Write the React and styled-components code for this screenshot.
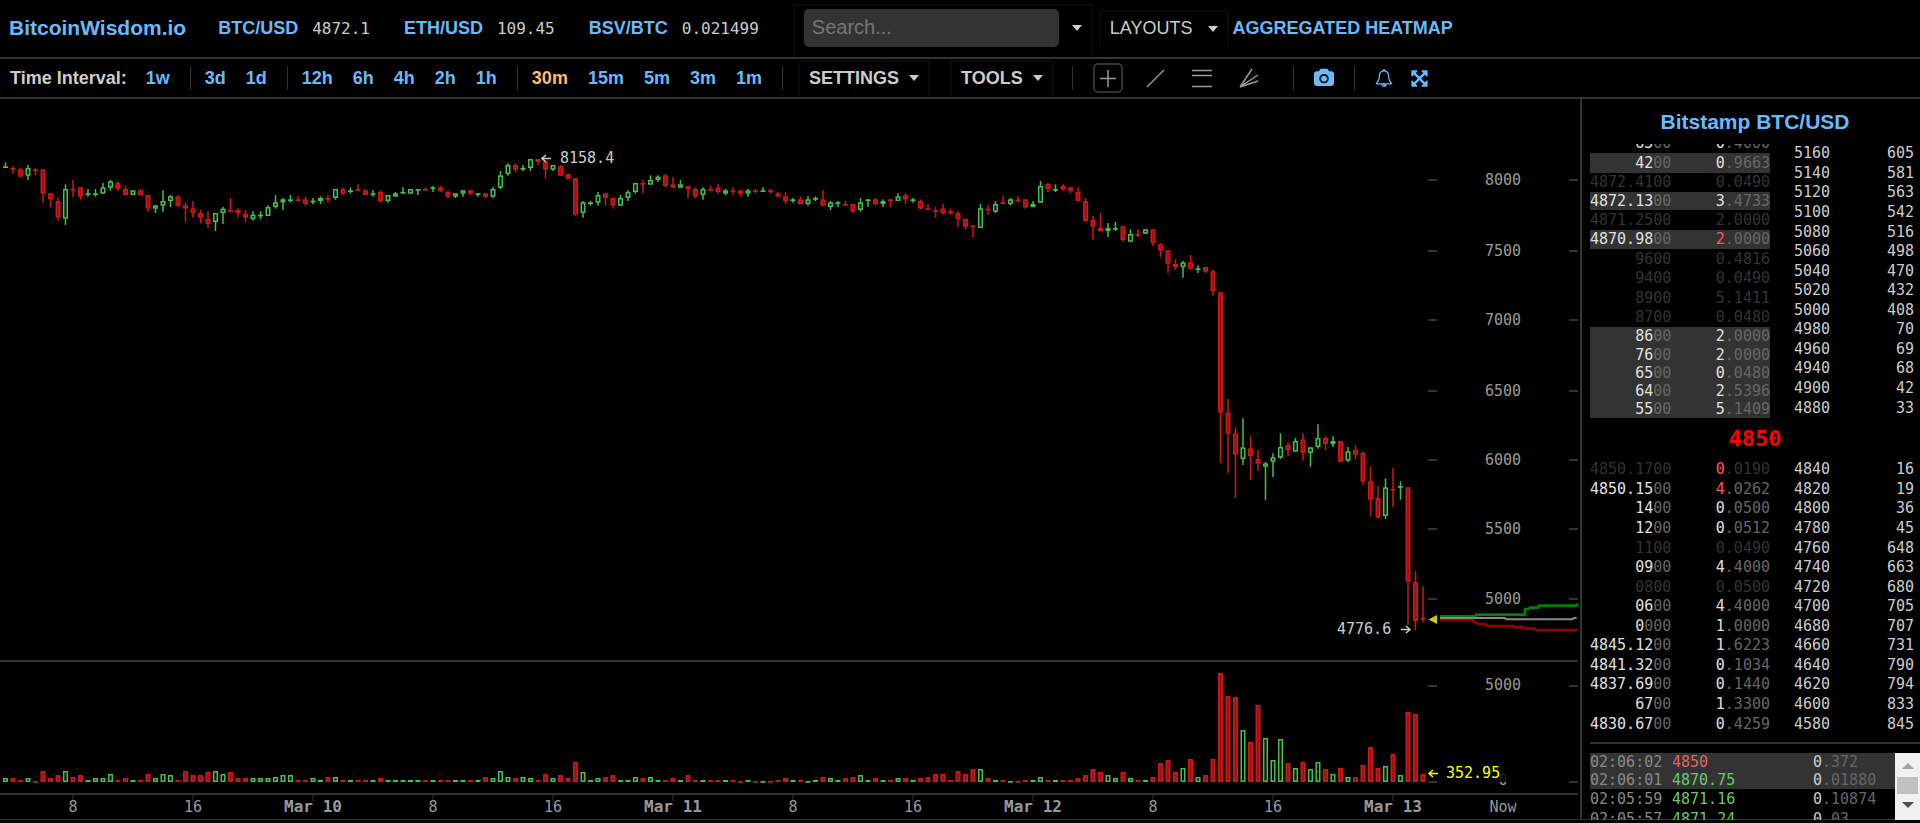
import React from 'react';
import styled, { createGlobalStyle, css } from 'styled-components';

const GlobalStyle = createGlobalStyle`
  * {
    box-sizing: border-box;
  }
  body {
    margin: 0;
    background: #000;
    color: #ccc;
    font-family: "Liberation Sans", Arial, sans-serif;
    font-size: 18px;
    overflow: hidden;
  }
`;

const mono = '"DejaVu Sans Mono", monospace';

/* ---------- data ---------- */

const tickers = [
  ['BTC/USD', '4872.1'],
  ['ETH/USD', '109.45'],
  ['BSV/BTC', '0.021499'],
];

const intervals = [
  ['1w'],
  ['3d', '1d'],
  ['12h', '6h', '4h', '2h', '1h'],
  ['30m', '15m', '5m', '3m', '1m'],
];

// price, trailing zeros, amount, state, row height
const askOrders = [
  ['65', '00', '0.4000', '', 20],
  ['42', '00', '0.9663', 'new', 20],
  ['4872.41', '00', '0.0490', 'dim', 19],
  ['4872.13', '00', '3.4733', 'new', 18],
  ['4871.25', '00', '2.0000', 'dim', 20],
  ['4870.98', '00', '2.0000', 'new down', 19],
  ['96', '00', '0.4816', 'dim', 20],
  ['94', '00', '0.0490', 'dim', 19],
  ['89', '00', '5.1411', 'dim', 20],
  ['87', '00', '0.0480', 'dim', 19],
  ['86', '00', '2.0000', 'new', 19],
  ['76', '00', '2.0000', 'new', 18],
  ['65', '00', '0.0480', 'new', 18],
  ['64', '00', '2.5396', 'new', 18],
  ['55', '00', '5.1409', 'new', 18],
];

const bidOrders = [
  ['4850.17', '00', '0.0190', 'dim down'],
  ['4850.15', '00', '4.0262', 'down'],
  ['14', '00', '0.0500', ''],
  ['12', '00', '0.0512', ''],
  ['11', '00', '0.0490', 'dim'],
  ['09', '00', '4.4000', ''],
  ['08', '00', '0.0500', 'dim'],
  ['06', '00', '4.4000', ''],
  ['0', '000', '1.0000', ''],
  ['4845.12', '00', '1.6223', ''],
  ['4841.32', '00', '0.1034', ''],
  ['4837.69', '00', '0.1440', ''],
  ['67', '00', '1.3300', ''],
  ['4830.67', '00', '0.4259', ''],
];

const askDepth = [
  [5160, 605], [5140, 581], [5120, 563], [5100, 542], [5080, 516], [5060, 498], [5040, 470],
  [5020, 432], [5000, 408], [4980, 70], [4960, 69], [4940, 68], [4900, 42], [4880, 33],
];

const bidDepth = [
  [4840, 16], [4820, 19], [4800, 36], [4780, 45], [4760, 648], [4740, 663], [4720, 680],
  [4700, 705], [4680, 707], [4660, 731], [4640, 790], [4620, 794], [4600, 833], [4580, 845],
];

const trades = [
  ['02:06:02', '4850', '0.372', 'sell', true],
  ['02:06:01', '4870.75', '0.01880', 'buy', true],
  ['02:05:59', '4871.16', '0.10874', 'buy', false],
  ['02:05:57', '4871.24', '0.03', 'buy', false],
];

// Each candle is "side high bodyTop bodyBottom low", in thirds of a pixel below `top`.
const candleParts = [
  {
    top: 31,
    data: `g 97 109 113 113,r 109 114 119 131,r 114 118 140 140,g 105 114 137 150,r 114 118 123 137,
    r 118 118 191 218,r 190 190 208 231,r 204 213 263 272,g 163 177 266 285,r 150 177 181 200,
    r 171 172 200 209,g 177 190 195 200,g 177 190 194 200,g 159 172 191 191,g 150 154 173 182,
    r 154 159 177 182,r 168 177 195 195,g 181 181 195 195,r 177 181 195 195,r 195 195 236 245,
    g 226 226 236 249,g 181 213 227 245,g 195 199 213 231,r 195 199 227 231,r 217 226 236 276,
    r 213 235 249 263,r 240 249 263 281,r 244 267 282 294,g 249 249 276 303,g 231 236 249 282,
    r 204 240 244 244,r 235 240 249 263,r 240 252 263 276,g 244 254 267 272,g 244 254 258 267,
    g 226 231 258 258,g 195 217 231 236,g 204 208 217 240,g 195 208 212 218,r 199 208 213 213,
    r 199 208 222 227,g 204 212 217 222,g 199 204 213 222,r 195 204 208 218,g 177 177 204 209,
    r 172 177 191 195,g 172 181 186 191,r 163 177 182 182,r 177 181 195 195,g 181 190 194 200,
    r 181 186 213 218,g 195 195 213 218,g 186 190 200 200,g 172 186 190 191,g 177 177 191 191,
    g 177 177 182 195,r 172 177 182 182,g 168 172 177 186,r 168 172 182 186,r 181 186 200 204,
    g 190 190 200 204,g 181 181 191 200,r 181 181 191 195,g 190 190 194 200,r 190 190 200 204,
    g 172 177 200 204,g 123 136 173 177,g 100 105 132 137,r 100 105 119 128,g 105 114 118 123,
    g 87 87 114 123,r 87 87 96 105,r 92 96 119 145,g 105 105 119 123,r 105 109 137 137,
    r 132 132 146 150,r 145 145 254 258,g 213 217 249 263,g 213 217 222 227,g 186 195 218 227,
    r 190 190 204 227,r 204 204 227 236,g 195 204 227 227,g 181 186 204 213,g 159 159 186 191,
    r 150 159 163 190,g 136 150 164 164,g 136 140 150 155,r 132 136 168 173,r 141 163 173 173,
    g 150 163 173 173,r 168 168 177 204,r 172 177 200 204,g 172 177 195 209,r 168 177 181 182,
    r 163 172 186 191,g 177 181 191 195,r 172 181 185 195,r 181 181 191 200,g 177 181 191 200,
    r 177 181 186 191,g 172 181 186 186,r 177 181 186 191,r 186 190 200 200,r 186 199 213 222,
    g 204 208 213 218,r 199 208 222 222,g 199 208 222 227,g 199 204 208 213,r 181 208 227 227,
    g 213 217 231 240,g 213 217 221 231,r 213 222 227 227,r 222 222 245 249,g 204 217 240 245,
    g 208 208 212 231,r 204 208 222 227,g 208 213 222 231,r 208 208 213 231,g 190 199 213 213,
    r 190 195 208 222,g 204 208 212 218,r 208 213 236 236,r 222 235 240 240,r 231 240 244 263,
    r 222 235 249 254,r 235 244 248 254,r 244 249 267 290,r 267 267 290 298,r 286 286 290 321,
    g 222 235 294 294,r 226 236 240 254,g 213 222 245 249,r 199 217 221 222,g 204 208 222 227,
    r 199 208 212 218`,
  },
  {
    top: 51,
    data: `r 148 148 172 176,g 153 162 171 171,g 93 108 158 159,r 98 102 117 126,g 103 117 121 126,
    r 103 108 118 122,r 111 112 122 131,r 112 126 153 153,r 144 153 213 216,r 198 210 230 270,
    r 189 234 243 243,g 219 234 243 261,g 216 234 239 243,r 228 229 270 275,g 238 252 275 275,
    r 238 252 256 261,g 238 238 251 252,r 238 238 279 288,r 279 283 302 320,r 300 301 341 369,
    r 328 342 351 360,g 333 337 351 383,r 315 337 356 360,g 346 355 359 369,r 351 351 365 369,
    r 360 364 423 437,r 427 427 788 939`,
  },
  {
    top: 281,
    data: `r 57 97 161 278,r 142 160 224 354,g 115 202 237 255,r 169 205 228 300,r 210 237 251 272,
    g 246 250 260 359,g 220 232 245 291,g 160 201 233 237,r 187 195 210 228,g 174 183 215 215,
    r 160 178 219 242,g 201 202 219 260,g 133 174 201 206,r 169 174 192 210,g 169 183 192 201,
    r 183 183 245 246,g 201 214 242 246,r 196 210 224 237,r 214 219 305 314,r 259 304 359 408,
    r 318 354 413 416,g 295 322 408 417,r 264 327 331 381,g 304 318 322 359,r 322 322 605 735,
    r 574 606 723 750,r 619 714 718 727`,
  },
];

const candles = candleParts.flatMap(({ top, data }) =>
  data.split(',').map((item) => {
    const [side, ...ys] = item.trim().split(' ');
    const [high, open, close, low] = ys.map((y) => top + Number(y) / 3);
    return { side, high, open, close, low };
  })
);

const volumes = [
  4, 4, 2, 4, 1, 11, 4, 7, 11, 5, 7, 2, 4, 4, 8, 2, 4, 2, 2, 8,
  4, 8, 7, 2, 11, 7, 7, 10, 11, 8, 10, 4, 4, 4, 4, 4, 5, 7, 7, 2,
  2, 4, 2, 5, 5, 2, 2, 2, 2, 2, 4, 2, 2, 2, 2, 2, 2, 2, 2, 2,
  2, 2, 2, 2, 5, 4, 11, 5, 4, 5, 4, 2, 8, 4, 7, 4, 20, 10, 2, 4,
  5, 7, 2, 2, 5, 4, 5, 2, 2, 4, 2, 7, 2, 2, 2, 2, 2, 2, 1, 2,
  1, 1, 1, 2, 4, 2, 2, 1, 2, 5, 4, 2, 4, 5, 7, 2, 4, 2, 2, 4,
  4, 2, 4, 5, 8, 8, 2, 11, 8, 13, 13, 4, 2, 2, 1, 1, 2, 2, 5, 2,
  2, 2, 2, 4, 7, 13, 10, 7, 4, 10, 4, 2, 2, 5, 19, 22, 10, 14, 23, 5,
  7, 23, 109, 86, 85, 52, 40, 77, 44, 22, 43, 19, 14, 20, 13, 20, 13, 8, 14, 5,
  5, 17, 35, 14, 16, 28, 7, 70, 68, 8,
];

const priceTicks = [
  [8000, 81], [7500, 152], [7000, 221], [6500, 292], [6000, 361], [5500, 430], [5000, 500],
];

const timeLabels = ['8', '16', 'Mar 10', '8', '16', 'Mar 11', '8', '16', 'Mar 12', '8', '16', 'Mar 13'];

/* ---------- header ---------- */

const Page = styled.div`
  display: flex;
  flex-direction: column;
  min-height: 100vh;
  min-width: 1480px;
`;

const TopBar = styled.header`
  display: flex;
  align-items: center;
  height: 59px;
  padding-left: 9px;
  border-bottom: 2px solid #333;
  white-space: nowrap;
`;

const link = css`
  color: #6bf;
  font-weight: bold;
  text-decoration: none;
`;

const Logo = styled.a`
  ${link}
  font-size: 21px;
  margin: 0 32px 2px 0;
`;

const Ticker = styled.a`
  ${link}
  display: flex;
  align-items: center;
  gap: 14px;
  margin-right: 34px;
`;

const TickerPrice = styled.span`
  color: #ccc;
  font: 16px ${mono};
`;

const SearchBox = styled.div`
  display: flex;
  align-items: center;
  align-self: flex-end;
  width: 300px;
  height: 53px;
  padding: 0 9px 7px;
  border: 2px solid #0a0a0a;
  border-bottom: 0;
  margin-right: 6px;
`;

const SearchInput = styled.input`
  width: 255px;
  height: 38px;
  padding: 0 8px 2px;
  border: 0;
  border-radius: 5px;
  background: #333;
  color: #ccc;
  font: 20px "Liberation Sans", Arial, sans-serif;
  &::placeholder {
    color: #757575;
  }
`;

const Caret = styled.span`
  display: inline-block;
  border: 5px solid transparent;
  border-top: 6px solid #ccc;
  border-bottom: 0;
`;

const CaretButton = styled.button`
  display: flex;
  padding: 4px;
  margin-left: 9px;
  border: 0;
  background: none;
`;

const MenuButton = styled.button`
  display: flex;
  align-items: center;
  gap: ${(p) => (p.$bold ? 10 : 15)}px;
  height: 37px;
  padding: 0 9px 2px;
  border: 2px solid #0a0a0a;
  border-bottom: 0;
  background: none;
  color: #ccc;
  font: ${(p) => (p.$bold ? 'bold' : 'normal')} 18px "Liberation Sans", Arial, sans-serif;
`;

const HeatmapLink = styled.a`
  ${link}
  margin-left: 4px;
`;

/* ---------- tool bar ---------- */

const ToolBar = styled.nav`
  display: flex;
  align-items: center;
  height: 40px;
  padding-left: 10px;
  border-bottom: 2px solid #333;
  white-space: nowrap;
`;

const ToolLabel = styled.span`
  font-weight: bold;
  margin-right: 19px;
`;

const IntervalGroup = styled.div`
  display: flex;
  align-items: center;
  gap: 20px;
  padding-right: 20px;
  margin-right: 14px;
  height: 24px;
  border-right: 1px solid #333;
`;

const IntervalLink = styled.a`
  ${link}
  ${(p) => p.$active && css`color: #fb6;`}
`;

const Menus = styled.div`
  display: flex;
  align-items: center;
  gap: 20px;
  margin: 0 18px 0 1px;
`;

const Divider = styled.span`
  width: 1px;
  height: 24px;
  background: #333;
`;

const DrawTools = styled.div`
  display: flex;
  align-items: center;
  gap: 17px;
  margin: 0 29px 0 20px;
`;

const ToolButton = styled.button`
  display: flex;
  align-items: center;
  justify-content: center;
  width: 30px;
  height: 30px;
  padding: 0;
  border: 2px solid ${(p) => (p.$active ? '#333' : 'transparent')};
  border-radius: 5px;
  background: none;
  color: #999;
`;

const IconButton = styled.button`
  display: flex;
  padding: 0;
  border: 0;
  background: none;
  color: #6bf;
  margin: 0 ${(p) => p.$right}px 0 ${(p) => p.$left}px;
`;

/* ---------- body ---------- */

const Main = styled.main`
  display: flex;
  align-items: flex-start;
`;

const ChartArea = styled.section`
  flex: 1;
  min-width: 0;
  border-bottom: 1px solid #333;
`;

const ChartSvg = styled.svg`
  display: block;
  width: 100%;
  height: auto;
  text {
    font-family: ${mono};
    font-size: 15px;
    fill: #999;
  }
  text.bright {
    fill: #ccc;
  }
  text.day {
    font-size: 16px;
    font-weight: bold;
  }
  text.volume {
    fill: #ff0;
  }
`;

const Sidebar = styled.aside`
  width: 340px;
  height: 721px;
  padding-left: 8px;
  border-left: 2px solid #333;
  border-bottom: 1px solid #333;
  font: 15px ${mono};
`;

const MarketTitle = styled.h1`
  margin: 0;
  text-align: center;
  font: bold 21px/45px "Liberation Sans", Arial, sans-serif;
`;

const TitleLink = styled.a`
  ${link}
`;

const Book = styled.div`
  display: flex;
  align-items: ${(p) => (p.$asks ? 'flex-end' : 'flex-start')};
  gap: 24px;
  height: 274px;
  overflow: hidden;
`;

const BookTable = styled.table`
  width: ${(p) => p.$width}px;
  ${(p) => p.$fill && css`height: 274px;`}
  border-collapse: collapse;
  line-height: 17px;
`;

const OrderRow = styled.tr`
  ${(p) => p.$height && css`height: ${p.$height}px;`}
  background: ${(p) => (p.$fresh ? '#333' : 'none')};
  color: ${(p) => (p.$dim ? '#333' : '#666')};
`;

const Cell = styled.td`
  padding: 0;
  text-align: ${(p) => p.$align || 'left'};
  width: ${(p) => (p.$width ? `${p.$width}px` : 'auto')};
`;

const Lead = styled.span`
  color: ${(p) => p.$color || 'inherit'};
`;

const LastPrice = styled.div`
  text-align: center;
  color: #f00;
  font-size: 22px;
  font-weight: bold;
  line-height: 42px;
`;

const Trades = styled.div`
  display: flex;
  height: 78px;
  margin-top: 8px;
  padding-top: 9px;
  border-top: 2px solid #333;
  overflow: hidden;
`;

const TradeTable = styled.table`
  flex: 1;
  height: 76px;
  border-collapse: collapse;
  line-height: 17px;
`;

const TradeRow = styled.tr`
  height: ${(p) => (p.$fresh ? 18 : 20)}px;
  background: ${(p) => (p.$fresh ? '#333' : 'none')};
  color: #666;
`;

const ScrollBar = styled.div`
  display: flex;
  flex-direction: column;
  align-items: center;
  gap: 8px;
  width: 25px;
  height: 67px;
  padding: 10px 0 9px;
  background: #f1f1f1;
`;

const ScrollArrow = styled.span`
  border: 6px solid transparent;
  ${(p) => (p.$up
    ? css`border-bottom-color: #a3a3a3; border-top: 0;`
    : css`border-top-color: #505050; border-bottom: 0;`)}
`;

const ScrollThumb = styled.span`
  width: 21px;
  height: 17px;
  background: #c1c1c1;
`;

/* ---------- icons ---------- */

const CameraIcon = () => (
  <svg width="20" height="20" viewBox="-64 -64 1920 1920" fill="currentColor">
    <path d="M896 672q119 0 203.500 84.500t84.500 203.500-84.500 203.500-203.500 84.500-203.500-84.500-84.500-203.500 84.500-203.500 203.500-84.500zm704-416q106 0 181 75t75 181v896q0 106-75 181t-181 75h-1408q-106 0-181-75t-75-181v-896q0-106 75-181t181-75h224l51-136q19-49 69.500-84.500t103.500-35.500h512q53 0 103.500 35.500t69.500 84.500l51 136h224zm-704 1152q185 0 316.500-131.500t131.500-316.500-131.500-316.500-316.500-131.500-316.500 131.500-131.500 316.500 131.500 316.500 316.500 131.500z" />
  </svg>
);

const BellIcon = () => (
  <svg width="18" height="18" viewBox="0 0 1792 1792" fill="currentColor">
    <path d="M912 1696q0-16-16-16-59 0-101.500-42.500t-42.500-101.500q0-16-16-16t-16 16q0 73 51.500 124.500t124.500 51.500q16 0 16-16zm-666-288h1300q-266-300-266-832 0-51-24-105t-69-103-121.500-80.500-169.500-31.500-169.500 31.500-121.500 80.500-69 103-24 105q0 532-266 832zm1482 0q0 52-38 90t-90 38h-448q0 106-75 181t-181 75-181-75-75-181h-448q-52 0-90-38t-38-90q50-42 91-88t85-119.500 74.500-158.500 50-206 19.500-260q0-152 117-282.500t307-158.500q-8-19-8-39 0-40 28-68t68-28 68 28 28 68q0 20-8 39 190 28 307 158.500t117 282.500q0 139 19.500 260t50 206 74.500 158.500 85 119.500 91 88z" />
  </svg>
);

const ExpandIcon = () => (
  <svg width="19" height="19" viewBox="0 0 1792 1792" fill="currentColor">
    <path d="M1411 541l-355 355 355 355 144-144q29-31 70-14 39 17 39 59v448q0 26-19 45t-45 19h-448q-42 0-59-40-17-39 14-69l144-144-355-355-355 355 144 144q31 30 14 69-17 40-59 40h-448q-26 0-45-19t-19-45v-448q0-42 40-59 39-17 69 14l144 144 355-355-355-355-144 144q-19 19-45 19-12 0-24-5-40-17-40-59v-448q0-26 19-45t45-19h448q42 0 59 40 17 39-14 69l-144 144 355 355 355-355-144-144q-31-30-14-69 17-40 59-40h448q26 0 45 19t19 45v448q0 42-39 59-13 5-25 5-26 0-45-19z" />
  </svg>
);

const drawTools = [
  ['Cross cursor', 'M13 5v17M5 13.500h16'],
  ['Trend line', 'M5 22L22 5'],
  ['Horizontal lines', 'M3 5.500h20M3 10.500h20M3 21.500h20'],
  ['Fan lines', 'M4 22L16 4M4 22L22 10M4 22L22 16'],
];

/* ---------- components ---------- */

const Candle = ({ candle, x }) => {
  const up = candle.side === 'g';
  const stroke = up ? '#46c046' : '#d01616';
  const height = Math.max(candle.close - candle.open - 1.5, 0.2);
  return (
    <g stroke={stroke} strokeWidth="1.5">
      <path d={`M${x} ${candle.high}V${candle.low}`} />
      <rect x={x - 1.75} y={candle.open + 0.75} width="3.5" height={height} fill={up ? '#000' : '#a01010'} />
    </g>
  );
};

const VolumeBar = ({ side, x, value }) => {
  const up = side === 'g';
  return (
    <rect
      x={x - 1.75}
      y={683 - value + 0.75}
      width="3.5"
      height={Math.max(value - 1.5, 0.2)}
      fill={up ? '#000' : '#a01010'}
      stroke={up ? '#46c046' : '#d01616'}
      strokeWidth="1.5"
    />
  );
};

const Chart = () => (
  <ChartSvg viewBox="0 0 1580 720" role="img" aria-label="BTC/USD 30 minute candles">
    <g stroke="#333" strokeWidth="2">
      <path d="M0 562H1578M0 695H1578" />
      {[...priceTicks, [5000, 587], [0, 683]].map(([label, y]) => (
        <path key={y} d={`M1428 ${y}h9M1569 ${y}h9`} />
      ))}
      {timeLabels.map((label, i) => (
        <path key={i} d={`M${73 + i * 120} 696v6`} strokeWidth="1" />
      ))}
    </g>

    {candles.map((candle, i) => (
      <Candle key={i} candle={candle} x={5.5 + i * 7.5} />
    ))}
    {volumes.map((value, i) => (
      <VolumeBar key={i} side={candles[i].side} value={value} x={5.5 + i * 7.5} />
    ))}

    {/* order depth on both sides of the last price */}
    <g transform="translate(1180 281) scale(0.3333)" fill="none" strokeWidth="8">
      <path stroke="#008000" d="M780 709H885L888 704H1035V687H1047L1050 683H1075L1077 677H1190L1194 671" />
      <path stroke="#900" d="M780 719H878L882 726L895 732H918L922 738H1000L1005 742H1030L1038 746H1065L1068 750H1194" />
      <path stroke="#888" strokeWidth="6" d="M780 714H975L978 718H1177L1182 714H1190" />
    </g>
    <path fill="#cc0" d="M1428.500 520.500l8.500-4.500v9z" />

    {priceTicks.map(([label, y]) => (
      <text key={label} x="1503" y={y + 5} textAnchor="middle">{label}</text>
    ))}
    <text x="1503" y="591" textAnchor="middle">5000</text>
    <text x="1503" y="686" textAnchor="middle">0</text>
    <rect x="1440" y="668" width="70" height="15" fill="#000" fillOpacity="0.8" />

    {timeLabels.map((label, i) => (
      <text key={i} x={73 + i * 120} y="713" textAnchor="middle" className={label.length > 2 ? 'day' : ''}>
        {label}
      </text>
    ))}
    <text x="1503" y="713" textAnchor="middle">Now</text>

    <text x="560" y="64" className="bright">8158.4</text>
    <text x="1337" y="535" className="bright">4776.6</text>
    <text x="1446" y="679" className="volume">352.95</text>
    <g fill="none" strokeWidth="1.5">
      <path stroke="#ccc" d="M551 59.500h-9m4-3.500l-4 3.500 4 3.500" />
      <path stroke="#ccc" d="M1401 530.500h9m-4-3.500l4 3.500-4 3.500" />
      <path stroke="#ff0" d="M1438 674.500h-9m4-3.500l-4 3.500 4 3.500" />
    </g>
  </ChartSvg>
);

const Orders = ({ rows, fill }) => (
  <BookTable $width={180} $fill={fill}>
    <tbody>
      {rows.map(([price, zeros, amount, state, height], i) => {
        const dim = state.includes('dim');
        const color = dim ? null : '#e0e0e0';
        return (
          <OrderRow key={i} $height={height} $dim={dim} $fresh={state.includes('new')}>
            <Cell $align="right" $width={81}>
              <Lead $color={color}>{price}</Lead>{zeros}
            </Cell>
            <Cell $align="right">
              <Lead $color={state.includes('down') ? '#f55' : color}>{amount[0]}</Lead>{amount.slice(1)}
            </Cell>
          </OrderRow>
        );
      })}
    </tbody>
  </BookTable>
);

const Depth = ({ rows }) => (
  <BookTable $width={120} $fill>
    <tbody>
      {rows.map(([price, amount]) => (
        <tr key={price}>
          <Cell>{price}</Cell>
          <Cell $align="right">{amount}</Cell>
        </tr>
      ))}
    </tbody>
  </BookTable>
);

const App = () => {
  return (
    <Page>
      <GlobalStyle />
      <TopBar>
        <Logo href="#">BitcoinWisdom.io</Logo>
        {tickers.map(([name, price]) => (
          <Ticker key={name} href="#">
            {name}
            <TickerPrice>{price}</TickerPrice>
          </Ticker>
        ))}
        <SearchBox>
          <SearchInput type="text" placeholder="Search..." aria-label="Search" />
          <CaretButton aria-label="Markets"><Caret /></CaretButton>
        </SearchBox>
        <MenuButton>LAYOUTS <Caret /></MenuButton>
        <HeatmapLink href="#">AGGREGATED HEATMAP</HeatmapLink>
      </TopBar>

      <ToolBar>
        <ToolLabel>Time Interval:</ToolLabel>
        {intervals.map((group) => (
          <IntervalGroup key={group[0]}>
            {group.map((name) => (
              <IntervalLink key={name} href="#" $active={name === '30m'}>{name}</IntervalLink>
            ))}
          </IntervalGroup>
        ))}
        <Menus>
          <MenuButton $bold>SETTINGS <Caret /></MenuButton>
          <MenuButton $bold>TOOLS <Caret /></MenuButton>
        </Menus>
        <Divider />
        <DrawTools>
          {drawTools.map(([name, d], i) => (
            <ToolButton key={name} $active={i === 0} aria-label={name}>
              <svg width="26" height="26" viewBox="0 0 26 26" fill="none" stroke="currentColor" strokeWidth="1.5">
                <path d={d} />
              </svg>
            </ToolButton>
          ))}
        </DrawTools>
        <Divider />
        <IconButton $left={20} $right={20} aria-label="Screenshot"><CameraIcon /></IconButton>
        <Divider />
        <IconButton $left={20} $right={17} aria-label="Alerts"><BellIcon /></IconButton>
        <IconButton $left={0} $right={0} aria-label="Full screen"><ExpandIcon /></IconButton>
      </ToolBar>

      <Main>
        <ChartArea>
          <Chart />
        </ChartArea>
        <Sidebar>
          <MarketTitle><TitleLink href="#">Bitstamp BTC/USD</TitleLink></MarketTitle>
          <Book $asks>
            <Orders rows={askOrders} />
            <Depth rows={askDepth} />
          </Book>
          <LastPrice>4850</LastPrice>
          <Book>
            <Orders rows={bidOrders} fill />
            <Depth rows={bidDepth} />
          </Book>
          <Trades>
            <TradeTable>
              <tbody>
                {trades.map(([time, price, amount, side, fresh]) => (
                  <TradeRow key={time} $fresh={fresh}>
                    <Cell $width={82}><Lead $color="#888">{time}</Lead></Cell>
                    <Cell $width={141}><Lead $color={side === 'buy' ? '#6c6' : '#d66'}>{price}</Lead></Cell>
                    <Cell><Lead $color="#ccc">{amount[0]}</Lead>{amount.slice(1)}</Cell>
                  </TradeRow>
                ))}
              </tbody>
            </TradeTable>
            <ScrollBar>
              <ScrollArrow $up />
              <ScrollThumb />
              <ScrollArrow />
            </ScrollBar>
          </Trades>
        </Sidebar>
      </Main>
    </Page>
  );
};

export default App;
